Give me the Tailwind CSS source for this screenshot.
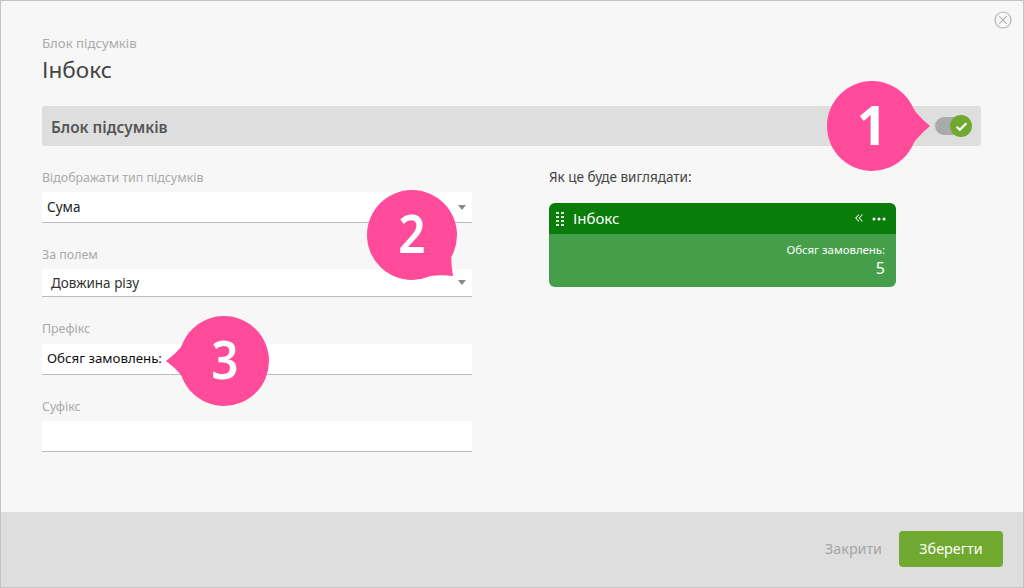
<!DOCTYPE html>
<html lang="uk">
<head>
<meta charset="UTF-8" />
<title>Блок підсумків</title>
<script src="https://cdn.jsdelivr.net/npm/@tailwindcss/browser@4"></script>
</head>
<body class="font-['Noto_Sans',sans-serif]">
<div class="relative w-[1024px] h-[588px] overflow-hidden border border-[#c4c4c4] bg-[#f7f7f7] flex flex-col">

  <!-- close -->
  <svg class="absolute right-[11px] top-[10px]" width="18" height="18" viewBox="0 0 18 18" fill="none" stroke="#b5b5b5" stroke-width="1.2">
    <circle cx="9" cy="9" r="8"/>
    <path d="M5.2 5.2 12.8 12.8M12.8 5.2 5.2 12.8"/>
  </svg>

  <main class="flex-1 pl-[41px] pr-[42px] pt-[34px]">
    <div class="text-[13.2px] leading-[16px] text-[#aaaaaa]">Блок підсумків</div>
    <h1 class="mt-[4px] text-[22.6px] leading-[30px] text-[#444444]">Інбокс</h1>

    <div class="mt-[21px] h-10 rounded-[3px] bg-[#dedede] flex items-center justify-between pl-[9px] pr-[9px]">
      <span class="pt-[4px] text-[15.4px] font-semibold text-[#555555]">Блок підсумків</span>
      <span class="relative w-[36px] h-[18px] rounded-full bg-[#aaaaaa] mr-[1px]">
        <span class="absolute right-[-1px] top-[-2px] w-[22px] h-[22px] rounded-full bg-[#70a92f] flex items-center justify-center">
          <svg width="13" height="11" viewBox="0 0 12 10" fill="none" stroke="#fff" stroke-width="2"><path d="M1.5 5.2 4.5 8 10.5 2"/></svg>
        </span>
      </span>
    </div>

    <div class="mt-[23px] flex">
      <!-- form -->
      <div class="w-[430px]">
        <label class="block pt-[1px] text-[12.4px] leading-[16px] text-[#aaaaaa]">Відображати тип підсумків</label>
        <div class="mt-[6px] h-[31px] bg-white border-b border-[#bbbbbb] flex items-center justify-between pl-[5px] pr-[6px] text-[13.5px] text-[#222222]">
          <span class="pt-[1px]">Сума</span>
          <svg width="8" height="5" viewBox="0 0 8 5"><path d="M0 0H8L4 5Z" fill="#888888"/></svg>
        </div>
        <label class="block mt-[23px] pt-[1px] text-[12.4px] leading-[16px] text-[#aaaaaa]">За полем</label>
        <div class="mt-[6px] h-[28px] bg-white border-b border-[#bbbbbb] flex items-center justify-between pl-[9px] pr-[6px] text-[13.5px] text-[#333333]">
          <span class="pt-[2px]">Довжина різу</span>
          <svg width="8" height="5" viewBox="0 0 8 5"><path d="M0 0H8L4 5Z" fill="#888888"/></svg>
        </div>
        <label class="block mt-[23px] pt-[1px] text-[12.4px] leading-[16px] text-[#aaaaaa]">Префікс</label>
        <div class="mt-[7px] h-[31px] bg-white border-b border-[#bbbbbb] flex items-center pl-[5px] text-[13.3px] text-[#111111]">Обсяг замовлень:</div>
        <label class="block mt-[23px] pt-[1px] text-[12.4px] leading-[16px] text-[#aaaaaa]">Суфікс</label>
        <div class="mt-[6px] h-[31px] bg-white border-b border-[#bbbbbb]"></div>
      </div>

      <!-- preview -->
      <div class="ml-[77px] w-[347px]">
        <div class="text-[13.5px] leading-[16px] text-[#444444]">Як це буде виглядати:</div>
        <div class="mt-[18px] rounded-[6px] overflow-hidden">
          <div class="h-[31px] bg-[#0a7c0a] flex items-center pl-[7px] pr-[10px] text-white">
            <svg width="9" height="16" viewBox="0 0 9 16" fill="#ffffff" fill-opacity=".85">
              <rect x="0" y="1" width="3" height="2"/><rect x="5" y="1" width="3" height="2"/>
              <rect x="0" y="5" width="3" height="2"/><rect x="5" y="5" width="3" height="2"/>
              <rect x="0" y="9" width="3" height="2"/><rect x="5" y="9" width="3" height="2"/>
              <rect x="0" y="13" width="3" height="2"/><rect x="5" y="13" width="3" height="2"/>
            </svg>
            <span class="ml-[8px] text-[15px] flex-1">Інбокс</span>
            <svg class="mb-[1px]" width="8" height="8" viewBox="0 0 8 8" fill="none" stroke="#e4f0e4" stroke-width="1.1"><path d="M4 .5.8 4 4 7.5M7.5.5 4.3 4 7.5 7.5"/></svg>
            <svg class="ml-[9px]" width="14" height="4" viewBox="0 0 14 4" fill="#ffffff"><circle cx="2" cy="2" r="1.5"/><circle cx="7" cy="2" r="1.5"/><circle cx="12" cy="2" r="1.5"/></svg>
          </div>
          <div class="h-[53px] bg-[#459e49] text-white text-right pr-[11px] pt-[8px]">
            <div class="text-[11.4px] leading-[15px]">Обсяг замовлень:</div>
            <div class="text-[16px] leading-[20px] mt-[1px]">5</div>
          </div>
        </div>
      </div>
    </div>
  </main>

  <footer class="h-[75px] bg-[#dedede] flex items-center justify-end pr-5 pb-[2px]">
    <button class="text-[14.3px] text-[#a5a5a5]">Закрити</button>
    <button class="ml-[17px] w-[104px] h-[36px] rounded-[4px] bg-[#70a92f] text-[14.4px] text-white">Зберегти</button>
  </footer>

  <!-- callouts -->
  <div class="absolute left-[826px] top-[80px] w-[150px] h-[92px]">
    <svg class="absolute inset-0" width="150" height="92" viewBox="0 0 150 92"><circle cx="45" cy="45" r="45" fill="#ff4b99"/><path d="M80 17Q86 31 103 45 86 59 80 73Z" fill="#ff4b99"/></svg>
    <span class="absolute left-0 top-0 w-[90px] h-[86px] flex items-center justify-center text-[53px] font-bold text-white leading-none">1</span>
  </div>
  <div class="absolute left-[366px] top-[189px] w-[92px] h-[92px]">
    <svg class="absolute inset-0" width="92" height="92" viewBox="0 0 92 92"><circle cx="45" cy="45" r="45" fill="#ff4b99"/><path d="M85 50Q83 70 86 86 68 84 50 88Z" fill="#ff4b99"/></svg>
    <span class="absolute left-0 top-0 w-[90px] h-[85px] flex items-center justify-center text-[53px] font-semibold scale-x-90 text-white leading-none">2</span>
  </div>
  <div class="absolute left-[165px] top-[315px] w-[105px] h-[92px]">
    <svg class="absolute inset-0" width="105" height="92" viewBox="0 0 105 92"><circle cx="58" cy="45" r="45" fill="#ff4b99"/><path d="M24 15Q18 32 0 45 18 58 24 75Z" fill="#ff4b99"/></svg>
    <span class="absolute left-[14px] top-0 w-[90px] h-[85px] flex items-center justify-center text-[53px] font-semibold scale-x-90 text-white leading-none">3</span>
  </div>
</div>
</body>
</html>
